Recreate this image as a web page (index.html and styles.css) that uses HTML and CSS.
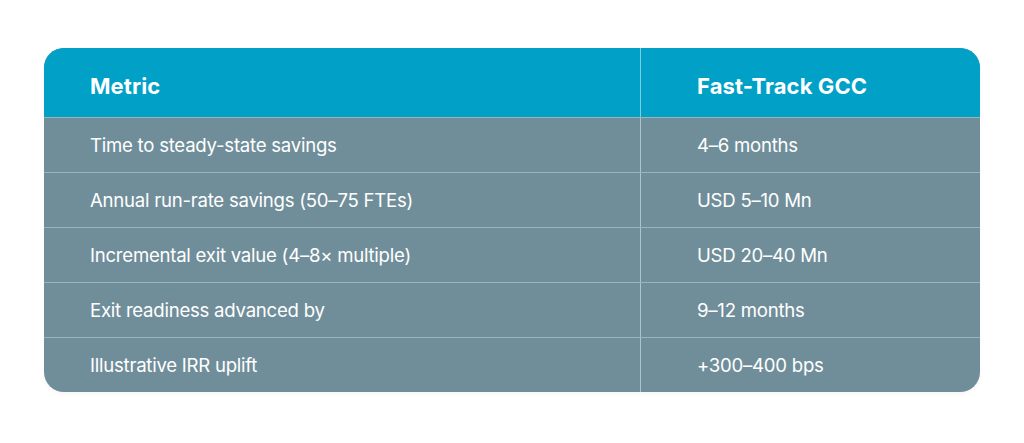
FILE: index.html
```html
<!DOCTYPE html>
<html>
<head>
<meta charset="utf-8">
<link rel="stylesheet" href="styles.css">
</head>
<body>
<div class="page">
  <div class="table">
    <div class="row head">
      <div class="cell c1">Metric</div>
      <div class="cell c2">Fast-Track GCC</div>
    </div>
    <div class="row">
      <div class="cell c1">Time to steady-state savings</div>
      <div class="cell c2">4–6 months</div>
    </div>
    <div class="row">
      <div class="cell c1">Annual run-rate savings (50–75 FTEs)</div>
      <div class="cell c2">USD 5–10 Mn</div>
    </div>
    <div class="row">
      <div class="cell c1">Incremental exit value (4–8× multiple)</div>
      <div class="cell c2">USD 20–40 Mn</div>
    </div>
    <div class="row">
      <div class="cell c1">Exit readiness advanced by</div>
      <div class="cell c2">9–12 months</div>
    </div>
    <div class="row">
      <div class="cell c1">Illustrative IRR uplift</div>
      <div class="cell c2">+300–400 bps</div>
    </div>
  </div>
</div>
</body>
</html>
```

FILE: styles.css
```css
html, body {
  margin: 0;
  padding: 0;
  background: #ffffff;
}
.page {
  width: 1024px;
  height: 443px;
  padding: 48px 44px 0 44px;
  box-sizing: border-box;
  font-family: Inter, "Noto Sans", sans-serif;
}
.table {
  width: 936px;
  border-radius: 20px;
  overflow: hidden;
  background: #708e9a;
  box-shadow: 0 2px 4px rgba(0, 0, 0, 0.04);
}
.row {
  display: grid;
  grid-template-columns: 597px 1fr;
  height: 55px;
  border-top: 1px solid #9db3bc;
  box-sizing: border-box;
  color: #ffffff;
  font-size: 18.6px;
  letter-spacing: -0.25px;
}
.row.head {
  height: 69px;
  border-top: none;
  background: #00a0c7;
  font-size: 22px;
  font-weight: 700;
  letter-spacing: 0.1px;
}
.cell {
  display: flex;
  align-items: center;
}
.row.head .cell {
  padding-top: 6px;
}
.c1 {
  padding-left: 46px;
  border-right: 1px solid #aec3cb;
}
.c2 {
  padding-left: 56px;
}
.row.head .c1 {
  border-right-color: #80cde3;
}
```
